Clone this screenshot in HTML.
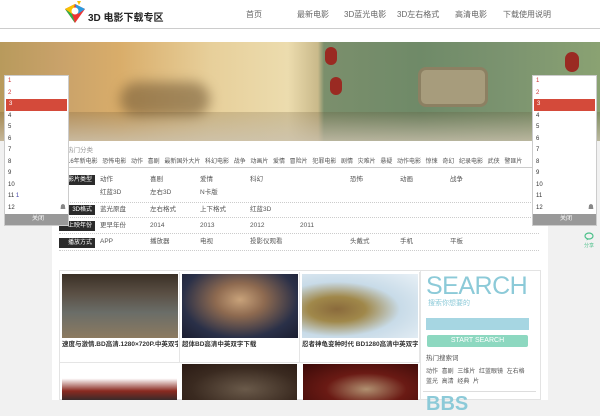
<!DOCTYPE html>
<html><head><meta charset="utf-8">
<style>
*{margin:0;padding:0;box-sizing:border-box}
body{width:600px;height:400px;overflow:hidden;background:#f1f1f1;font-family:"Liberation Sans","Noto Sans CJK SC",sans-serif;font-size:7px;color:#333;position:relative}
.a{position:absolute;white-space:nowrap}
#hdr{left:0;top:0;width:600px;height:29px;background:#fff;border-bottom:1px solid #ccc}
#gap{left:0;top:29px;width:600px;height:13px;background:#fff}
#banner{left:0;top:42px;width:600px;height:99px;background:linear-gradient(90deg,#b89a5c 0%,#c9a26a 10%,#d9ad6a 20%,#e7cf9a 35%,#ecdcae 48%,#c9b98a 53%,#7b8f6c 54%,#6f8a68 70%,#7c9470 85%,#8aa272 100%)}
#banner .shade{left:0;top:70px;width:600px;height:29px;background:linear-gradient(180deg,rgba(90,70,40,.2),rgba(200,190,170,.8))}
#main{left:52px;top:141px;width:496px;height:259px;background:#fff}
.nav{top:9px;font-size:8px;color:#666}
.pop{top:75px;width:65px;height:151px;background:#fff;border:1px solid #ccc}
.pop div{height:11.5px;line-height:11.5px;padding-left:3px;font-size:6px;color:#333}
.pop .r{color:#c33}
.pop .on{background:#d44a3a;color:#fff;margin:0 1px}
.pop .ft{position:absolute;left:0;bottom:0;width:63px;height:11px;background:#999;color:#fff;text-align:center}
.lbl{left:59px;width:36px;height:10px;background:#2b2b2b;color:#fff;text-align:right;padding-right:3px;line-height:10px;font-size:6px;overflow:hidden}
.row{left:59px;width:480px;border-bottom:1px dotted #ccc}
.c{font-size:6.5px;color:#555;line-height:10px;height:10px}
.card{top:272px;width:120px;height:90px;border-right:1px solid #e5e5e5}
.img{left:2px;top:2px;width:116px;height:64px}
.cap{font-size:6.5px;font-weight:bold;color:#333;left:2px;top:68px;width:116px;overflow:hidden;line-height:10px}
</style></head><body>
<div class="a" id="hdr">
 <svg class="a" style="left:62px;top:1px" width="26" height="24" viewBox="0 0 26 24"><polygon points="3,8 13,3 23,8 13,22" fill="#e33"/><polygon points="3,8 13,3 10,13" fill="#f9c200"/><polygon points="13,3 23,8 16,13" fill="#2a9be0"/><polygon points="3,8 10,13 13,22" fill="#2bb34a"/><circle cx="13" cy="10" r="3.5" fill="#fff"/><polygon points="15,0 19,0 17,4" fill="#f9c200"/></svg>
 <div class="a" style="left:88px;top:9px;font-size:10px;font-weight:bold;color:#222">3D 电影下载专区</div>
 <div class="a nav" style="left:246px">首页</div>
 <div class="a nav" style="left:297px">最新电影</div>
 <div class="a nav" style="left:344px">3D蓝光电影</div>
 <div class="a nav" style="left:397px">3D左右格式</div>
 <div class="a nav" style="left:455px">高清电影</div>
 <div class="a nav" style="left:503px">下载使用说明</div>
</div>
<div class="a" id="gap"></div>
<div class="a" id="banner">
 <div class="a" style="left:325px;top:5px;width:12px;height:18px;border-radius:6px;background:#9a2a22"></div>
 <div class="a" style="left:330px;top:35px;width:12px;height:18px;border-radius:6px;background:#9a2a22"></div>
 <div class="a" style="left:565px;top:10px;width:14px;height:20px;border-radius:7px;background:#9a2a22"></div>
 <div class="a" style="left:418px;top:25px;width:70px;height:40px;border-radius:8px;border:3px solid #8c8062;background:#a79c7c"></div>
 <div class="a" style="left:120px;top:40px;width:90px;height:35px;border-radius:20px;background:#6b5230;opacity:.55;filter:blur(6px)"></div>
 <div class="a shade"></div>
</div>
<div class="a" id="main"></div>
<div class="a c" style="left:67px;top:146px;color:#999">热门分类</div>
<div class="a" style="left:67px;top:157px;width:472px;border-bottom:1px solid #ccc;height:11px;line-height:10px;overflow:hidden;font-size:6px;color:#555;word-spacing:3px">16年新电影 恐怖电影 动作 喜剧 最新国外大片 科幻电影 战争 动画片 爱情 冒险片 犯罪电影 剧情 灾难片 悬疑 动作电影 惊悚 奇幻 纪录电影 武侠 警匪片</div>

<div class="a row" style="top:172px;height:31px"></div>
<div class="a lbl" style="top:175px">影片类型</div>
<div class="a c" style="left:100px;top:175px">动作</div><div class="a c" style="left:150px;top:175px">喜剧</div><div class="a c" style="left:200px;top:175px">爱情</div><div class="a c" style="left:250px;top:175px">科幻</div><div class="a c" style="left:350px;top:175px">恐怖</div><div class="a c" style="left:400px;top:175px">动画</div><div class="a c" style="left:450px;top:175px">战争</div>
<div class="a c" style="left:100px;top:188px">红蓝3D</div><div class="a c" style="left:150px;top:188px">左右3D</div><div class="a c" style="left:200px;top:188px">N卡版</div>
<div class="a row" style="top:204px;height:14px"></div>
<div class="a lbl" style="top:205px">3D格式</div>
<div class="a c" style="left:100px;top:205px">蓝光原盘</div><div class="a c" style="left:150px;top:205px">左右格式</div><div class="a c" style="left:200px;top:205px">上下格式</div><div class="a c" style="left:250px;top:205px">红蓝3D</div>
<div class="a row" style="top:220px;height:14px"></div>
<div class="a lbl" style="top:221px">上映年份</div>
<div class="a c" style="left:100px;top:221px">更早年份</div><div class="a c" style="left:150px;top:221px">2014</div><div class="a c" style="left:200px;top:221px">2013</div><div class="a c" style="left:250px;top:221px">2012</div><div class="a c" style="left:300px;top:221px">2011</div>
<div class="a row" style="top:236px;height:15px"></div>
<div class="a lbl" style="top:238px">播放方式</div>
<div class="a c" style="left:100px;top:237px">APP</div><div class="a c" style="left:150px;top:237px">播放器</div><div class="a c" style="left:200px;top:237px">电视</div><div class="a c" style="left:250px;top:237px">投影仪观看</div><div class="a c" style="left:350px;top:237px">头戴式</div><div class="a c" style="left:400px;top:237px">手机</div><div class="a c" style="left:450px;top:237px">平板</div>

<div class="a" style="left:59px;top:270px;width:482px;height:130px;border:1px solid #e3e3e3;background:#fff"></div>
<div class="a" style="left:60px;top:362px;width:360px;border-top:1px solid #e5e5e5"></div>
<div class="a card" style="left:60px"><div class="a img" style="background:linear-gradient(180deg,#3a3026 0%,#5a4f44 30%,#6a6d68 60%,#8c7a60 100%)"></div><div class="a cap">速度与激情.BD高清.1280×720P.中英双字</div></div>
<div class="a card" style="left:180px"><div class="a img" style="background:radial-gradient(ellipse at 50% 40%,#c8a27a 0%,#8e6a50 30%,#2a3048 70%,#1a1d30 100%)"></div><div class="a cap">超体BD高清中英双字下载</div></div>
<div class="a card" style="left:300px"><div class="a img" style="background:radial-gradient(ellipse at 30% 55%,#8a6a3c 0%,#a0884a 25%,#c8dbe8 55%,#e8f0f6 100%)"></div><div class="a cap">忍者神龟变种时代 BD1280高清中英双字</div></div>
<div class="a" style="left:62px;top:364px;width:115px;height:36px;background:linear-gradient(180deg,#fff 0%,#fff 40%,#8a2a20 75%,#3a2a2a 100%)"></div>
<div class="a" style="left:182px;top:364px;width:115px;height:36px;background:radial-gradient(ellipse at 55% 70%,#6a5a4a 0%,#3a2a20 60%,#2a1a14 100%)"></div>
<div class="a" style="left:303px;top:364px;width:115px;height:36px;background:radial-gradient(ellipse at 55% 70%,#b09070 0%,#6a1a14 45%,#3a0a08 100%)"></div>

<div class="a" style="left:420px;top:271px;width:120px;height:129px;border-left:1px solid #e5e5e5"></div>
<div class="a" style="left:426px;top:272px;font-size:25px;color:#8ccad8;letter-spacing:-0.5px">SEARCH</div>
<div class="a" style="left:428px;top:298px;font-size:7px;color:#8ccad8">搜索你想要的</div>
<div class="a" style="left:426px;top:318px;width:103px;height:12px;background:#a6d6e2"></div>
<div class="a" style="left:427px;top:335px;width:101px;height:12px;background:#8dd8c0;border-radius:2px;color:#fff;font-size:7px;text-align:center;line-height:12px">START SEARCH</div>
<div class="a c" style="left:426px;top:354px">热门搜索词</div>
<div class="a c" style="left:426px;top:367px;width:108px;height:20px;white-space:normal;font-size:6px;word-spacing:2px">动作 喜剧 三维片 红蓝眼镜 左右格 蓝光 高清 经典 片</div>
<div class="a" style="left:423px;top:391px;width:113px;border-top:1px solid #ddd"></div>
<div class="a" style="left:426px;top:393px;font-size:20px;color:#8ccad8;font-weight:bold">BBS</div>

<div class="a" style="left:582px;top:232px;width:14px;height:16px;text-align:center;color:#4cc08a;font-size:5px;line-height:6px"><svg width="10" height="9" viewBox="0 0 10 9"><ellipse cx="5" cy="4" rx="4" ry="3" fill="none" stroke="#4cc08a" stroke-width="1.2"/><path d="M3 6.5 L2.5 8.5 L5 7" fill="#4cc08a"/></svg><br>分享</div>

<div class="a pop" style="left:4px">
<div class="r">1</div><div class="r">2</div><div class="on">3</div><div>4</div><div>5</div><div>6</div><div>7</div><div>8</div><div>9</div><div>10</div><div>11 <span style="color:#44a">1</span></div><div>12<span style="float:right;margin-right:2px;color:#888">☗</span></div>
<div class="ft">关闭</div></div>
<div class="a pop" style="left:532px">
<div class="r">1</div><div class="r">2</div><div class="on">3</div><div>4</div><div>5</div><div>6</div><div>7</div><div>8</div><div>9</div><div>10</div><div>11</div><div>12<span style="float:right;margin-right:2px;color:#888">☗</span></div>
<div class="ft">关闭</div></div>
</body></html>
